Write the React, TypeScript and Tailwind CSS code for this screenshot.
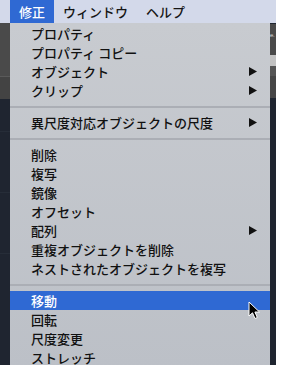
import React from "react";

type Item = { label: string; arrow?: boolean; active?: boolean } | { sep: true };

const items: Item[] = [
  { label: "プロパティ" },
  { label: "プロパティ コピー" },
  { label: "オブジェクト", arrow: true },
  { label: "クリップ", arrow: true },
  { sep: true },
  { label: "異尺度対応オブジェクトの尺度", arrow: true },
  { sep: true },
  { label: "削除" },
  { label: "複写" },
  { label: "鏡像" },
  { label: "オフセット" },
  { label: "配列", arrow: true },
  { label: "重複オブジェクトを削除" },
  { label: "ネストされたオブジェクトを複写" },
  { sep: true },
  { label: "移動", active: true },
  { label: "回転" },
  { label: "尺度変更" },
  { label: "ストレッチ" },
];

function Arrow() {
  return (
    <svg width="8" height="9" viewBox="0 0 8 9">
      <polygon points="0,0 8,4.5 0,9" fill="#111" />
    </svg>
  );
}

function Cursor() {
  return (
    <svg width="13" height="19" viewBox="0 0 13 19" className="absolute left-[248px] top-[301px]">
      <path d="M1 1 L1 15 L4.5 11.8 L7 17.5 L9.3 16.5 L6.9 11 L11.5 11 Z" fill="#000" stroke="#fff" strokeWidth="1" strokeLinejoin="round" />
    </svg>
  );
}

export default function App() {
  return (
    <div
      className="relative w-[287px] h-[365px] overflow-hidden bg-white flex flex-col"
      style={{ fontFamily: '"Noto Sans CJK JP", "Noto Sans", sans-serif' }}
    >
      <div className="flex h-[23px] w-[276px] bg-[#d3d9ea] text-[13px] leading-[23px] text-[#151515] font-medium">
        <div className="w-[10px]" />
        <div className="px-[9px] bg-[#2f69d3] text-white">修正</div>
        <div className="px-[9px]">ウィンドウ</div>
        <div className="px-[9px]">ヘルプ</div>
      </div>
      <div className="flex flex-1">
        <div className="w-[10px] flex flex-col">
          <div className="h-[53px] bg-[#4a4a4a]" />
          <div className="h-[1px] bg-[#5a5a5a]" />
          <div className="h-[22px] bg-[#434343]" />
          <div className="flex-1 bg-[#1f2530] flex flex-col">
            <div className="h-[32px]" />
            <div className="h-[1px] bg-[#262d38]" />
            <div className="h-[60px]" />
            <div className="h-[1px] bg-[#262d38]" />
            <div className="h-[60px]" />
            <div className="h-[1px] bg-[#262d38]" />
          </div>
        </div>
        <div className="w-[260px] bg-gradient-to-b from-[#c8cbd0] to-[#bcc0c7] pt-[1px] flex flex-col text-[13px] text-[#111] font-medium">
          {items.map((it, i) =>
            "sep" in it ? (
              <div key={i} className="h-[13px] flex flex-col justify-center">
                <div className="h-[2px] bg-[#abaeb5]" />
              </div>
            ) : (
              <div
                key={i}
                className={
                  "h-[19px] flex items-center justify-between pl-[21px] pr-[13px] leading-none " +
                  (it.active ? "bg-[#2f69d3] text-white" : "")
                }
              >
                <span>{it.label}</span>
                {it.arrow ? <Arrow /> : null}
              </div>
            )
          )}
        </div>
        <div className="w-[6px] flex flex-col">
          <div className="h-[1px] bg-[#1f2530]" />
          <div className="h-[31px] bg-[#4a4a4a] pt-[8px] text-[6px] leading-none text-[#ddd] tracking-tighter" style={{ fontFamily: '"Liberation Sans", sans-serif' }}>e.</div>
          <div className="h-[11px] bg-[#c2c2c2]" />
          <div className="h-[10px] bg-[#555]" />
          <div className="h-[22px] bg-[#464646]" />
          <div className="flex-1 bg-[#1f2530]" />
        </div>
        <div className="flex-1 bg-white" />
      </div>
      <Cursor />
    </div>
  );
}
